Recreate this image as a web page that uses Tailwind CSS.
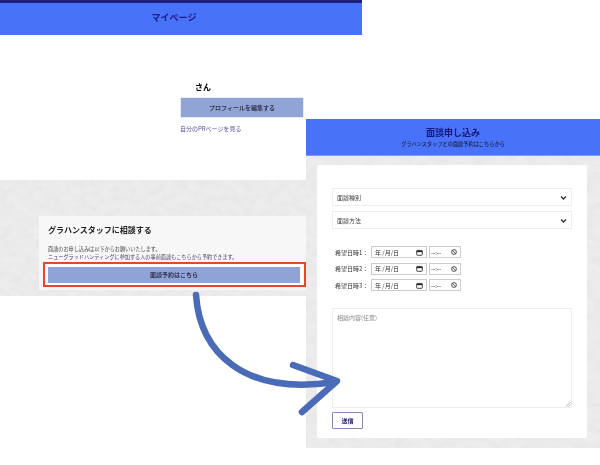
<!DOCTYPE html>
<html lang="ja">
<head>
    <meta charset="UTF-8">
    <title>面談申し込み</title>
    <script src="https://cdn.jsdelivr.net/npm/@tailwindcss/browser@4"></script>
</head>
<body class="bg-white font-['Noto_Sans_CJK_JP','Liberation_Sans',sans-serif]">
    <div class="relative w-[600px] h-[465px] overflow-hidden bg-white blur-[0.3px]">

        <!-- shared paper texture -->
        <svg class="absolute w-0 h-0">
            <filter id="paper" x="0" y="0" width="100%" height="100%">
                <feTurbulence type="fractalNoise" baseFrequency="0.09 0.13" numOctaves="4" seed="7"/>
                <feColorMatrix values="0 0 0 0 0.5  0 0 0 0 0.5  0 0 0 0 0.5  0.25 0 0 0 -0.08"/>
            </filter>
        </svg>

        <!-- マイページ screenshot -->
        <div class="absolute left-0 top-0 w-[362px] h-[296px] flex flex-col bg-white">
            <header class="h-[35px] shrink-0 flex items-center justify-center pr-[14px] pb-[3px] bg-[#4872f7] border-t-[3px] border-[#1e1f7a]">
                <h1 class="text-[9px] font-bold text-[#1f1c86]">マイページ</h1>
            </header>
            <div class="h-[145px] shrink-0 pl-[180px] pt-[46px]">
                <p class="pl-[15px] h-[16px] leading-[12px] text-[8px] font-bold text-black">さん</p>
                <div class="w-[124px] h-[21px] flex items-center justify-center rounded-[1px] bg-[#90a4d6] border border-[#e6ebf8] text-[6px] font-bold text-[#33364f]">プロフィールを編集する</div>
                <p class="mt-[6px] text-[6px] leading-[10px] text-[#5b5299]">自分のPRページを見る</p>
            </div>
            <div class="relative grow bg-[#ededed] pl-[39px] pt-[36px]">
                <svg class="absolute left-0 top-0 w-full h-full"><rect width="100%" height="100%" filter="url(#paper)"/></svg>
                <div class="relative w-[267px] h-[74px] bg-[#f7f7f7] px-[9px] pt-[8px]">
                    <h2 class="text-[8px] leading-[12px] font-bold text-[#222]">グラハンスタッフに相談する</h2>
                    <p class="mt-[9px] text-[5.15px] leading-[7.5px] text-[#444]">面談のお申し込みは以下からお願いいたします。<br>ニューグラッドハンティングに参加する人の事前面談もこちらから予約できます。</p>
                </div>
            </div>
        </div>
        <!-- 赤枠 -->
        <div class="absolute left-[43px] top-[262px] w-[263px] h-[25px] border-[2.5px] border-[#ee4423] bg-white pl-[3px] flex items-center">
            <div class="w-[252px] h-[16px] bg-[#8fa3d6] flex items-center justify-center text-[6px] font-bold text-[#2d3050]">面談予約はこちら</div>
        </div>

        <!-- 面談申し込み screenshot -->
        <div class="absolute left-[306px] top-[119px] w-[294px] h-[329px] flex flex-col bg-[#ededed]">
            <svg class="absolute left-0 top-0 w-full h-full"><rect width="100%" height="100%" filter="url(#paper)"/></svg>
            <header class="relative h-[37px] shrink-0 flex flex-col items-center bg-[#4872f7] border-b border-[#7f9cf8] pt-[8px]">
                <h1 class="text-[9px] leading-[12px] font-bold text-[#17157a]">面談申し込み</h1>
                <p class="text-[5.2px] leading-[9px] font-medium text-[#1f2340]">グラハンスタッフとの面談予約はこちらから</p>
            </header>
            <div class="relative mx-[11px] mt-[9px] w-[270px] h-[273px] bg-white rounded-[2px] px-[15px] pt-[23px]">
                <div class="h-[18px] flex items-center justify-between px-[4px] border border-[#eeeeee] text-[6px] text-[#444]">
                    <span>面談種別</span>
                    <svg class="w-[7px] h-[7px]" viewBox="0 0 10 10" fill="none" stroke="#333" stroke-width="2"><path d="M1.5 3.5 5 7l3.5-3.5"/></svg>
                </div>
                <div class="mt-[5px] h-[18px] flex items-center justify-between px-[4px] border border-[#eeeeee] text-[6px] text-[#444]">
                    <span>面談方法</span>
                    <svg class="w-[7px] h-[7px]" viewBox="0 0 10 10" fill="none" stroke="#333" stroke-width="2"><path d="M1.5 3.5 5 7l3.5-3.5"/></svg>
                </div>

                <div class="mt-[17px] flex flex-col gap-[4.5px] pl-[3px] text-[6px] text-[#333]">
                    <div class="h-[12px] flex items-center">
                        <span class="w-[36px]">希望日時1：</span>
                        <div class="w-[56px] h-[12px] flex items-center justify-between px-[3px] border border-[#cccccc]"><span>年 /月/日</span><svg class="w-[7px] h-[7px]" viewBox="0 0 10 10" fill="none" stroke="#222" stroke-width="1.2"><rect x="1" y="2" width="8" height="7" rx="1"/><path d="M1 3.5h8" stroke-width="2"/></svg></div>
                        <div class="ml-[2px] w-[32px] h-[12px] flex items-center justify-between px-[1px] pr-[3px] border border-[#cccccc]"><span class="text-[#222]">--:--</span><svg class="w-[6px] h-[6px]" viewBox="0 0 10 10" fill="none" stroke="#222" stroke-width="1.3"><circle cx="5" cy="5" r="4"/><path d="M2.5 2.5 7.5 7.5"/></svg></div>
                    </div>
                    <div class="h-[12px] flex items-center">
                        <span class="w-[36px]">希望日時2：</span>
                        <div class="w-[56px] h-[12px] flex items-center justify-between px-[3px] border border-[#cccccc]"><span>年 /月/日</span><svg class="w-[7px] h-[7px]" viewBox="0 0 10 10" fill="none" stroke="#222" stroke-width="1.2"><rect x="1" y="2" width="8" height="7" rx="1"/><path d="M1 3.5h8" stroke-width="2"/></svg></div>
                        <div class="ml-[2px] w-[32px] h-[12px] flex items-center justify-between px-[1px] pr-[3px] border border-[#cccccc]"><span class="text-[#222]">--:--</span><svg class="w-[6px] h-[6px]" viewBox="0 0 10 10" fill="none" stroke="#222" stroke-width="1.3"><circle cx="5" cy="5" r="4"/><path d="M2.5 2.5 7.5 7.5"/></svg></div>
                    </div>
                    <div class="h-[12px] flex items-center">
                        <span class="w-[36px]">希望日時3：</span>
                        <div class="w-[56px] h-[12px] flex items-center justify-between px-[3px] border border-[#cccccc]"><span>年 /月/日</span><svg class="w-[7px] h-[7px]" viewBox="0 0 10 10" fill="none" stroke="#222" stroke-width="1.2"><rect x="1" y="2" width="8" height="7" rx="1"/><path d="M1 3.5h8" stroke-width="2"/></svg></div>
                        <div class="ml-[2px] w-[32px] h-[12px] flex items-center justify-between px-[1px] pr-[3px] border border-[#cccccc]"><span class="text-[#222]">--:--</span><svg class="w-[6px] h-[6px]" viewBox="0 0 10 10" fill="none" stroke="#222" stroke-width="1.3"><circle cx="5" cy="5" r="4"/><path d="M2.5 2.5 7.5 7.5"/></svg></div>
                    </div>
                </div>

                <div class="relative mt-[17px] h-[100px] border border-[#eeeeee] px-[4px] pt-[4px] text-[6px] leading-[9px] text-[#888]">
                    相談内容(任意)
                    <svg class="absolute right-0 bottom-0 w-[6px] h-[6px]" viewBox="0 0 6 6" fill="none" stroke="#777" stroke-width="0.6"><path d="M1 5.5 5.5 1M3.5 5.5 5.5 3.5"/></svg>
                </div>
                <div class="mt-[4px] w-[31px] h-[17px] flex items-center justify-center rounded-[1px] border border-[#8e84bd] text-[6px] font-bold text-[#1c1a6e]">送信</div>
            </div>
        </div>

        <!-- 矢印 -->
        <svg class="absolute left-0 top-0 w-[600px] h-[465px]" viewBox="0 0 600 465" fill="none" stroke="#4a6bb8" stroke-width="6.5" stroke-linecap="round" stroke-linejoin="round">
            <path d="M196 295C200 352 243 396 335 382"/>
            <path d="M293 365 337 381 302 412"/>
        </svg>
    </div>
</body>
</html>
